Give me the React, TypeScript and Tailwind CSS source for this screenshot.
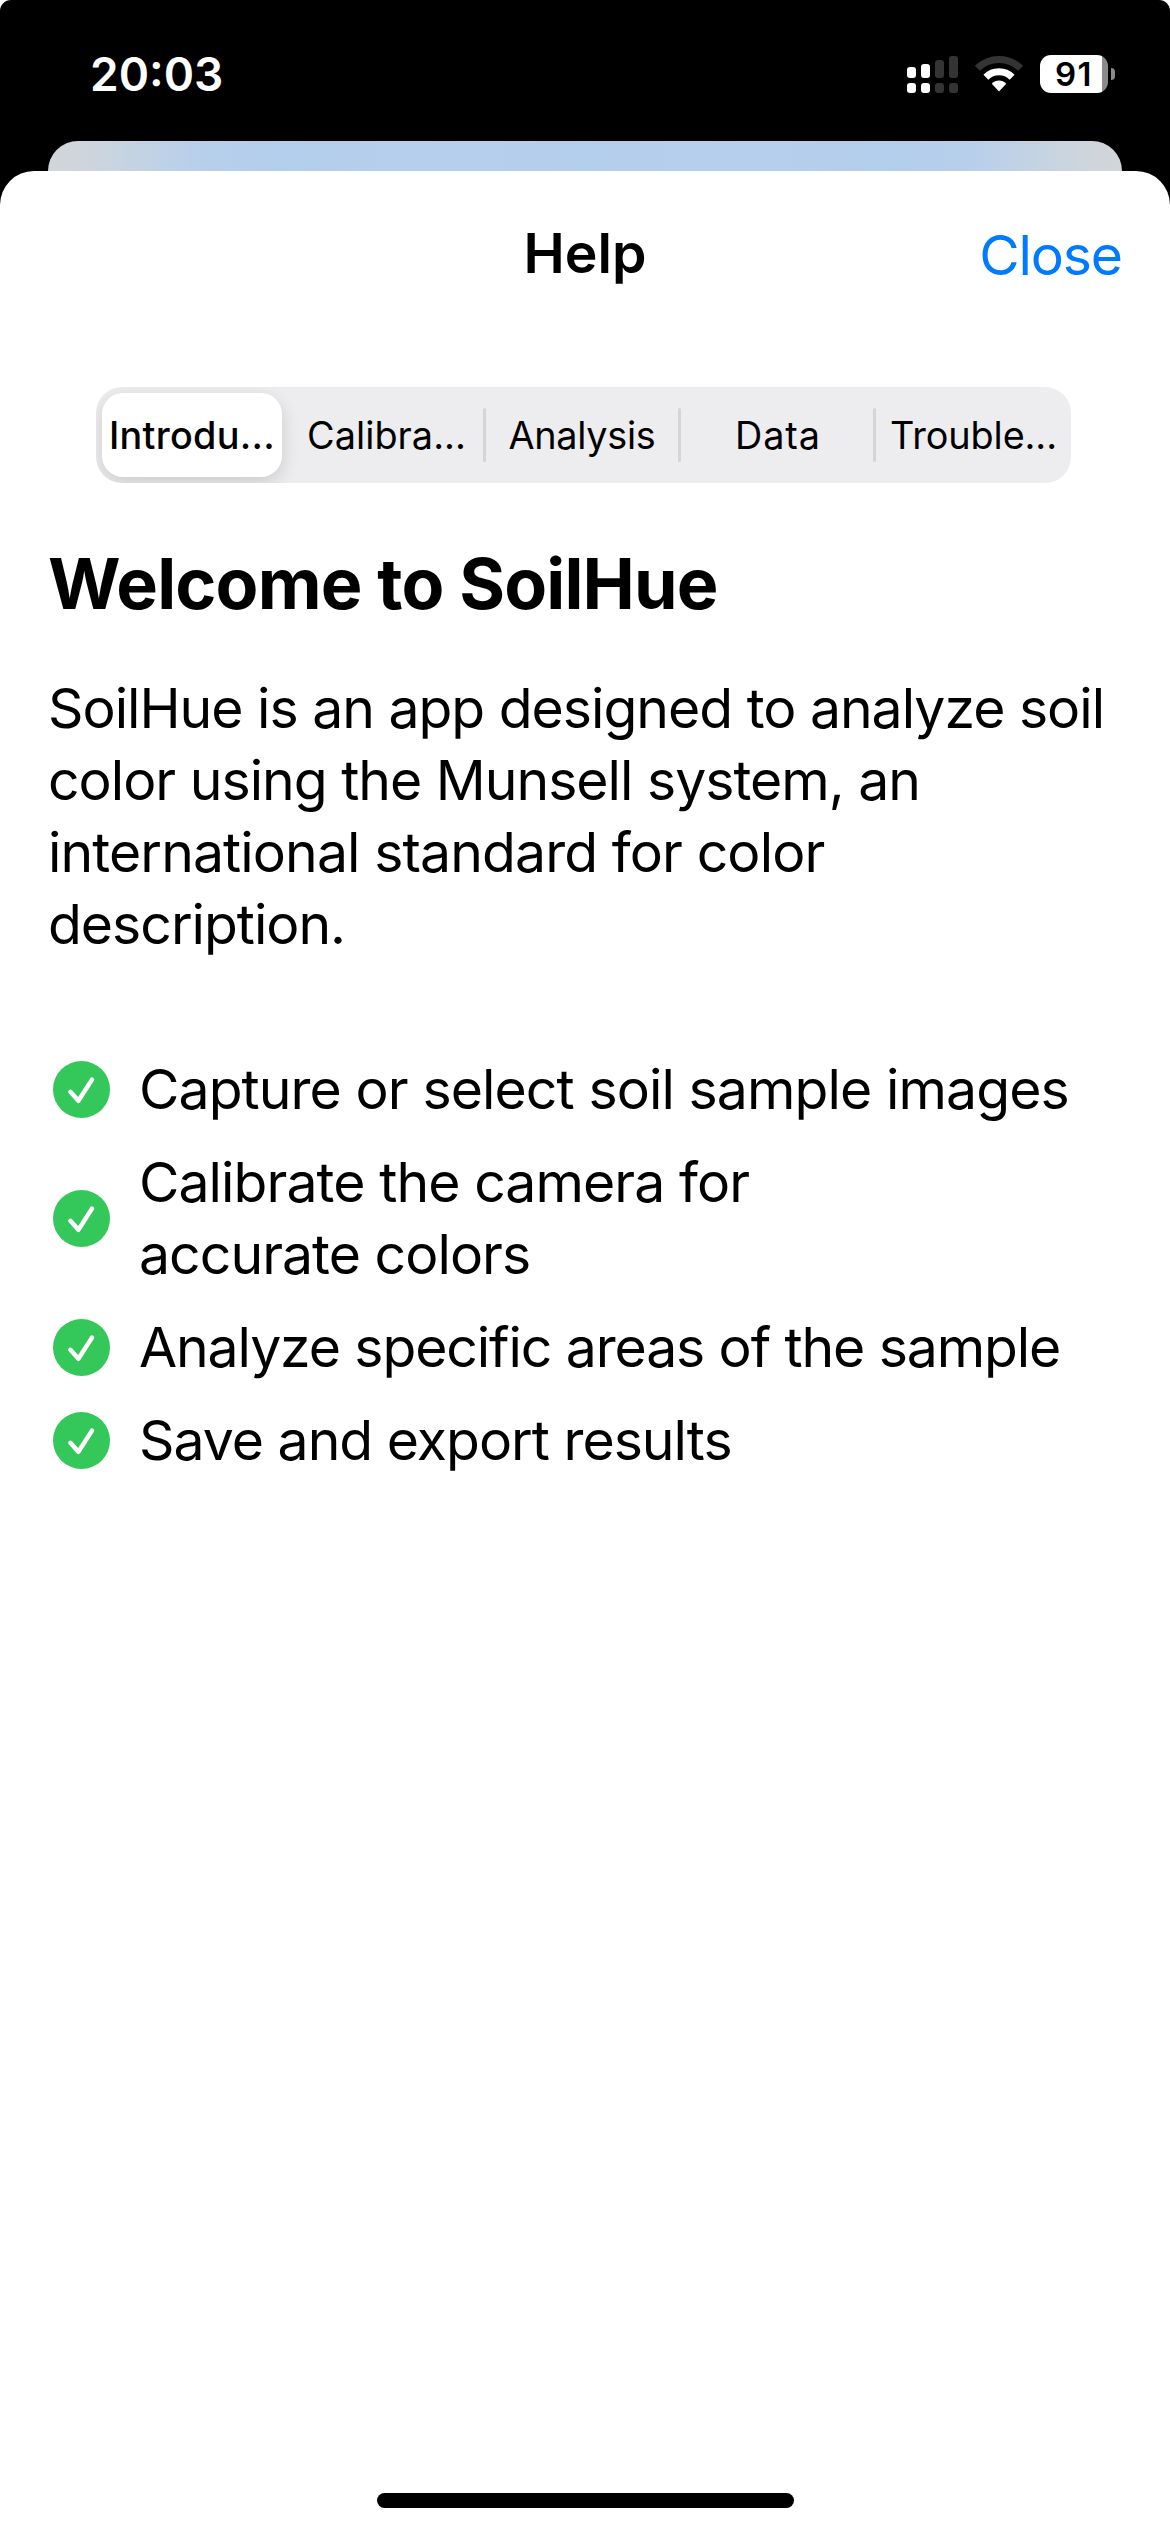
type Line = { text: string; tracking: string };

const intro: Line[] = [
  { text: "SoilHue is an app designed to analyze soil", tracking: "tracking-[-1px]" },
  { text: "color using the Munsell system, an", tracking: "tracking-[-0.99px]" },
  { text: "international standard for color", tracking: "tracking-[-0.88px]" },
  { text: "description.", tracking: "tracking-[-1px]" },
];

const features: Line[][] = [
  [{ text: "Capture or select soil sample images", tracking: "tracking-[-0.9px]" }],
  [
    { text: "Calibrate the camera for", tracking: "tracking-[-0.91px]" },
    { text: "accurate colors", tracking: "tracking-[-0.95px]" },
  ],
  [{ text: "Analyze specific areas of the sample", tracking: "tracking-[-1.1px]" }],
  [{ text: "Save and export results", tracking: "tracking-[-0.98px]" }],
];

function Lines({ lines }: { lines: Line[] }) {
  return (
    <>
      {lines.map((line) => (
        <span key={line.text} className={`block whitespace-nowrap ${line.tracking}`}>
          {line.text}
        </span>
      ))}
    </>
  );
}

function SignalIcon() {
  return (
    <svg width="51" height="38" viewBox="0 0 51 38">
      <g fill="#fff">
        <rect x="0" y="12" width="9" height="11" rx="3" />
        <rect x="14" y="9" width="9" height="14" rx="3" />
        <rect x="0" y="28" width="9" height="10" rx="3" />
        <rect x="14" y="28" width="9" height="10" rx="3" />
      </g>
      <g fill="#343434">
        <rect x="28" y="5" width="9" height="18" rx="3" />
        <rect x="42" y="1" width="9" height="22" rx="3" />
        <rect x="28" y="28" width="9" height="10" rx="3" />
        <rect x="42" y="28" width="9" height="10" rx="3" />
      </g>
    </svg>
  );
}

function WifiIcon() {
  return (
    <svg width="48" height="38" viewBox="0 0 48 38" fill="none" strokeWidth="7">
      <path d="M2.4 13.4A30.5 30.5 0 0 1 45.6 13.4" stroke="#343434" />
      <path d="M10.9 22.2A18.6 18.6 0 0 1 37.1 22.2" stroke="#fff" />
      <path d="M24 36.4L16.8 28.7Q19.9 25.4 24 25.4T31.2 28.7Z" fill="#fff" />
    </svg>
  );
}

function Battery() {
  return (
    <div className="flex items-center gap-[3px]">
      <div className="flex h-[38px] w-[68px] items-center justify-center overflow-hidden rounded-[11px] bg-[linear-gradient(90deg,#fff_62px,#8b8b8b_62px)]">
        <span className="text-[33px] leading-[38px] font-semibold tracking-[1.5px] text-black">91</span>
      </div>
      <div className="h-3 w-1 rounded-r-full bg-[#8b8b8b]" />
    </div>
  );
}

function CheckBadge() {
  return (
    <svg width="57" height="57" viewBox="0 0 57 57" fill="none" className="mt-px shrink-0">
      <circle cx="28.5" cy="28.5" r="28.5" fill="#34c759" />
      <path
        d="M17.4 30.8L25.4 39.8L39 18.6"
        stroke="#fff"
        strokeWidth="4.5"
        strokeLinecap="round"
        strokeLinejoin="round"
      />
    </svg>
  );
}

function Divider() {
  return <div className="h-[54px] w-[3px] shrink-0 rounded-full bg-[#d5d5d7]" />;
}

export default function App() {
  return (
    <div className="h-[2532px] w-[1170px] overflow-hidden bg-white font-['Inter',sans-serif] text-black">
      <div className="flex h-[2532px] flex-col rounded-t-[11px] bg-black">
        <div className="flex h-[141px] shrink-0 items-start justify-between pr-[55px] pl-[90px] text-white">
          <span className="mt-[46px] text-[46px] leading-[56px] font-[560] tracking-[0px]">20:03</span>
          <div className="mt-[55px] flex items-center">
            <SignalIcon />
            <div className="ml-[17px] flex">
              <WifiIcon />
            </div>
            <div className="ml-[17px]">
              <Battery />
            </div>
          </div>
        </div>

        <div className="mx-12 h-[30px] shrink-0 rounded-t-[30px] bg-[linear-gradient(90deg,#d2d5d8_0px,#d0d5dc_30px,#c6d4e1_75px,#bfd1e7_115px,#b7cfeb_155px,#b3ceec_230px,#b6cfec_400px,#b4ceed_537px,#b6cfec_674px,#b3ceec_844px,#b7cfeb_919px,#bfd1e7_959px,#c6d4e1_999px,#d0d5dc_1044px,#d2d5d8_1074px)]" />

        <main className="flex flex-1 flex-col rounded-t-[34px] bg-white">
          <header className="grid grid-cols-3 pt-[46px] text-[55.3px] leading-[72px]">
            <span className="col-start-2 text-center font-semibold">Help</span>
            <button className="mt-0.5 justify-self-end pr-12 tracking-[-1.1px] text-[#007aff]">Close</button>
          </header>

          <nav className="mt-[96px] ml-24 flex h-24 w-[975px] items-center overflow-hidden rounded-[26px] bg-[#ededef] text-[37.8px] leading-[46px] font-[440]">
            <div className="mx-1.5 flex h-[84px] w-[180px] shrink-0 items-center justify-center rounded-[21px] bg-white font-[540] tracking-[0.3px] shadow-[0_6px_18px_rgba(0,0,0,0.14)]">
              Introdu...
            </div>
            <div className="w-[195px] pl-0.5 text-center tracking-[0.05px]">Calibra...</div>
            <Divider />
            <div className="w-48 text-center tracking-[-0.3px]">Analysis</div>
            <Divider />
            <div className="w-48 pl-0.5 text-center tracking-[0.9px]">Data</div>
            <Divider />
            <div className="w-[195px] text-center tracking-[-0.1px]">Trouble...</div>
          </nav>

          <section className="mt-[57px] px-12 text-[55.3px] leading-[72px]">
            <h1 className="text-[70px] leading-[87px] font-bold tracking-[-0.85px]">Welcome to SoilHue</h1>
            <p className="mt-[45px]">
              <Lines lines={intro} />
            </p>
            <ul className="mt-[93px] flex flex-col gap-[21px]">
              {features.map((lines) => (
                <li key={lines[0].text} className="flex items-center gap-[29px] pl-[5px]">
                  <CheckBadge />
                  <div>
                    <Lines lines={lines} />
                  </div>
                </li>
              ))}
            </ul>
          </section>

          <div className="mt-auto mb-6 ml-[377px] h-[15px] w-[417px] rounded-full bg-black" />
        </main>
      </div>
    </div>
  );
}
